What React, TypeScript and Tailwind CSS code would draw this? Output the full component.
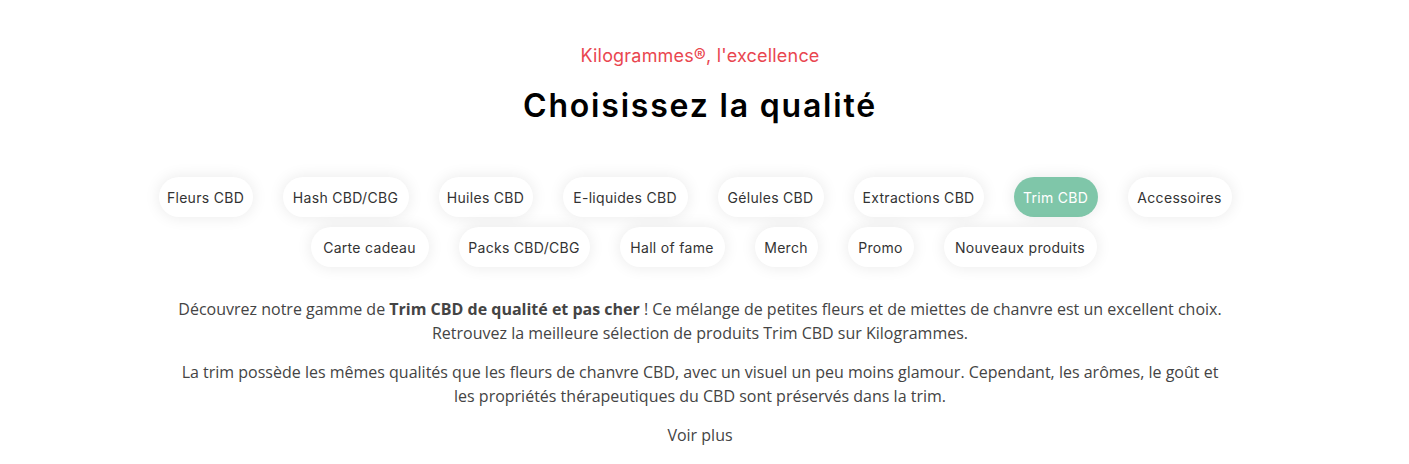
import React from "react";

const row1: [string, number][] = [
  ["Fleurs CBD", 94],
  ["Hash CBD/CBG", 126],
  ["Huiles CBD", 94],
  ["E-liquides CBD", 125],
  ["Gélules CBD", 106],
  ["Extractions CBD", 130],
  ["Trim CBD", 84],
  ["Accessoires", 104],
];
const row2: [string, number][] = [
  ["Carte cadeau", 118],
  ["Packs CBD/CBG", 131],
  ["Hall of fame", 105],
  ["Merch", 63],
  ["Promo", 66],
  ["Nouveaux produits", 153],
];

function Pill({ label, w }: { label: string; w: number }) {
  const active = label === "Trim CBD";
  return (
    <div
      style={{ width: w }}
      className={
        "h-[40px] shrink-0 rounded-full flex items-center justify-center text-[14px] tracking-[0.3px] whitespace-nowrap shadow-[0_0_16px_rgba(0,0,0,0.09)] " +
        (active ? "bg-[#7fc6a9] text-white" : "bg-white text-[#333333]")
      }
    >
      {label}
    </div>
  );
}

export default function App() {
  return (
    <div className="w-[1409px] h-[464px] bg-white overflow-hidden font-['Inter','Open_Sans',sans-serif]">
      <div className="pr-[9px] pt-[42px] text-center">
        <div className="text-[18px] leading-[27px] text-[#e9464f] tracking-[0.2px]">
          Kilogrammes®, l'excellence
        </div>
        <h1 className="mt-[13px] text-[32px] leading-[48px] font-semibold text-black tracking-[1.8px]">
          Choisissez la qualité
        </h1>
      </div>
      <div className="mt-[47px] flex flex-col gap-[10px]">
        <div className="flex justify-center gap-[30px] pr-[19px]">
          {row1.map(([l, w]) => (
            <Pill key={l} label={l} w={w} />
          ))}
        </div>
        <div className="flex justify-center gap-[30px] pr-[2px]">
          {row2.map(([l, w]) => (
            <Pill key={l} label={l} w={w} />
          ))}
        </div>
      </div>
      <div className="pr-[9px] mt-[30px] flex flex-col items-center font-['Open_Sans',sans-serif] text-[16px] leading-[24px] text-[#444444] text-center">
        <p className="max-w-[1050px]">
          Découvrez notre gamme de <strong className="font-bold">Trim CBD de qualité et pas cher</strong> ! Ce mélange de petites fleurs et de miettes de chanvre est un excellent choix. Retrouvez la meilleure sélection de produits Trim CBD sur Kilogrammes.
        </p>
        <p className="max-w-[1050px] mt-[15px]">
          La trim possède les mêmes qualités que les fleurs de chanvre CBD, avec un visuel un peu moins glamour. Cependant, les arômes, le goût et les propriétés thérapeutiques du CBD sont préservés dans la trim.
        </p>
        <p className="mt-[15px]">Voir plus</p>
      </div>
    </div>
  );
}
